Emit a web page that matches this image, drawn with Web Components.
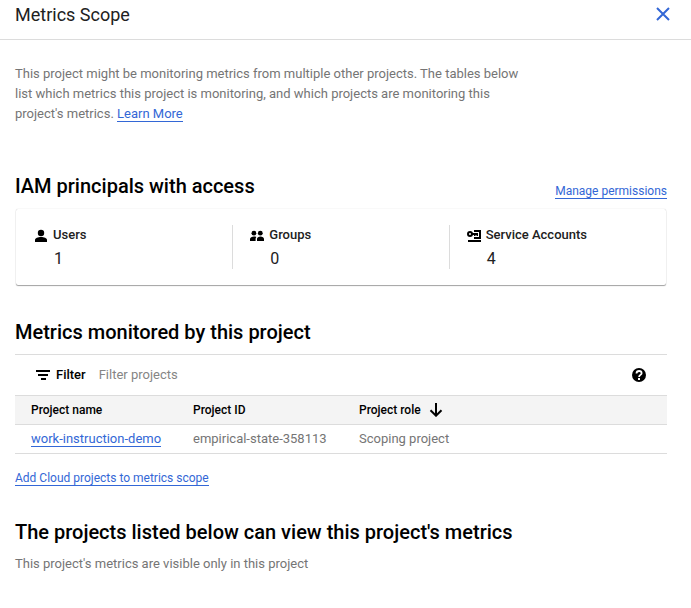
<!DOCTYPE html>
<html lang="en">
<head>
<meta charset="utf-8">
<meta name="viewport" content="width=device-width, initial-scale=1">
<title>Metrics Scope</title>
<style>
  body {
    margin: 0;
    background: #fff;
    color: #000;
    font-family: Roboto, "Liberation Sans", sans-serif;
    font-size: 13px;
    line-height: 20px;
    --link: #3367d6;
    --muted: #757575;
    --line: #dcdcdc;
  }
</style>
</head>
<body>
<metrics-scope-panel></metrics-scope-panel>

<script>
const ICONS = {
  close: '<path d="M1 1 13 13M13 1 1 13" fill="none" stroke="currentColor" stroke-width="2"/>',
  user: '<circle cx="7" cy="4" r="3.2"/><path d="M1 13v-2c0-2 3-3 6-3s6 1 6 3v2z"/>',
  group: '<circle cx="3.900" cy="4.200" r="2.400"/><circle cx="10.300" cy="4.200" r="2.400"/><path d="M0 12v-2c0-1.600 2-2.500 4-2.500.8 0 1.600.1 2.300.4C5.800 8.500 5.600 9.200 5.600 10v2zM7 12v-2c0-1.600 1.600-2.500 3.500-2.500S14 8.400 14 10v2z"/>',
  key: '<circle cx="3" cy="5" r="2" fill="none" stroke="currentColor" stroke-width="2"/><path d="M5 4h6v3H9.500V6h-1v1H7V6H5zM7 1h7v9H7V8h5V3H7zM1 11h13v2H1z"/>',
  filter: '<path d="M0 2h14v2H0zM2 6h10v2H2zM5 10h5v2H5z"/>',
  help: '<circle cx="7" cy="7" r="7"/><path d="M4.500 5.500C4.500 3.900 5.500 3 7.100 3s2.500.8 2.500 2.200c0 1.700-2.500 1.700-2.500 3.800" fill="none" stroke="#fff" stroke-width="1.800"/><path fill="#fff" d="M6 10h2v2H6z"/>',
  down: '<path d="M7 0v12.400M1.500 7.200 7 12.700l5.500-5.500" fill="none" stroke="currentColor" stroke-width="2"/>'
};

class ScopeIcon extends HTMLElement {
  connectedCallback() {
    const root = this.attachShadow({ mode: 'open' });
    root.innerHTML = `<style>
      :host { display: inline-flex; flex: none; width: 14px; height: 14px; }
      svg { display: block; width: 100%; height: 100%; fill: currentColor; }
    </style><svg viewBox="0 0 14 14" aria-hidden="true">${ICONS[this.getAttribute('name')]}</svg>`;
  }
}
customElements.define('scope-icon', ScopeIcon);

class ScopeLink extends HTMLElement {
  connectedCallback() {
    const root = this.attachShadow({ mode: 'open' });
    root.innerHTML = `<style>
      :host { display: inline; }
      a { color: var(--link); text-decoration: none; border-bottom: 1px solid currentColor; }
    </style><a href="#"><slot></slot></a>`;
  }
}
customElements.define('scope-link', ScopeLink);

class PanelHeader extends HTMLElement {
  connectedCallback() {
    const root = this.attachShadow({ mode: 'open' });
    root.innerHTML = `<style>
      :host { display: flex; justify-content: space-between; align-items: flex-start;
        padding: 3px 21px 12px 15px; border-bottom: 1px solid var(--line); }
      h1 { margin: 0; font-size: 18px; font-weight: 400; line-height: 24px; color: #212121; }
      button { display: flex; margin: 4px 0 0; padding: 0; border: 0; background: none; color: var(--link); cursor: pointer; }
    </style><h1><slot></slot></h1>
    <button type="button" aria-label="Close"><scope-icon name="close"></scope-icon></button>`;
  }
}
customElements.define('panel-header', PanelHeader);

class PrincipalCount extends HTMLElement {
  connectedCallback() {
    const root = this.attachShadow({ mode: 'open' });
    root.innerHTML = `<style>
      :host { display: grid; grid-template-columns: 14px 1fr; column-gap: 5px; row-gap: 4px; align-content: start;
        flex: 1; box-sizing: border-box; height: 44px; padding-left: 17px; color: #212121; }
      :host(:not(:first-child)) { border-left: 1px solid var(--line); }
      scope-icon { margin-top: 4px; color: #000; }
      .label { font-weight: 500; }
      .value { grid-column: 2; font-size: 16px; line-height: 20px; padding-left: 1px; }
    </style><scope-icon name="${this.getAttribute('icon')}"></scope-icon>
    <span class="label">${this.getAttribute('label')}</span>
    <span class="value"><slot></slot></span>`;
  }
}
customElements.define('principal-count', PrincipalCount);

class PrincipalsCard extends HTMLElement {
  connectedCallback() {
    const root = this.attachShadow({ mode: 'open' });
    root.innerHTML = `<style>
      :host { display: flex; margin: 0 1px; padding: 16px 1px; border-radius: 2px; background: #fff;
        box-shadow: 0 0 1px rgba(0,0,0,.25), 0 1px 1px rgba(0,0,0,.35); }
    </style><slot></slot>`;
  }
}
customElements.define('principals-card', PrincipalsCard);

class FilterBar extends HTMLElement {
  connectedCallback() {
    const root = this.attachShadow({ mode: 'open' });
    root.innerHTML = `<style>
      :host { display: flex; align-items: center; height: 40px; padding: 0 21px; border-top: 1px solid var(--line); }
      label { margin-left: 6px; font-weight: 500; }
      input { flex: 1; min-width: 0; margin: 0 0 0 13px; padding: 0; border: 0; outline: 0; background: none; font: inherit; color: #000; }
      input::placeholder { color: #858585; opacity: 1; }
      button { display: flex; padding: 0; border: 0; background: none; color: #000; cursor: pointer; }
    </style><scope-icon name="filter"></scope-icon>
    <label for="filter">Filter</label>
    <input id="filter" type="text" placeholder="Filter projects">
    <button type="button" aria-label="Help"><scope-icon name="help"></scope-icon></button>`;
  }
}
customElements.define('filter-bar', FilterBar);

class ProjectsTable extends HTMLElement {
  connectedCallback() {
    const root = this.attachShadow({ mode: 'open' });
    root.innerHTML = `<style>
      :host { display: block; }
      table { width: 100%; border-collapse: collapse; table-layout: fixed; }
      th, td { height: 28px; padding: 0 0 0 16px; text-align: left; white-space: nowrap;
        border-top: 1px solid var(--line); border-bottom: 1px solid var(--line); }
      th { background: #f4f4f4; font-size: 12px; font-weight: 500; }
      td { color: var(--muted); }
      .name, .id { box-sizing: border-box; }
      .name { width: 162px; } .id { width: 166px; }
      .sort { display: flex; align-items: center; gap: 8px; }
      .sort button { display: flex; padding: 0; border: 0; background: none; color: #000; cursor: pointer; }
    </style><table>
      <thead><tr>
        <th class="name" scope="col">Project name</th>
        <th class="id" scope="col">Project ID</th>
        <th scope="col"><div class="sort">Project role
          <button type="button" aria-label="Sort by project role"><scope-icon name="down"></scope-icon></button></div></th>
      </tr></thead>
      <tbody><tr>
        <td><scope-link>work-instruction-demo</scope-link></td>
        <td>empirical-state-358113</td>
        <td>Scoping project</td>
      </tr></tbody>
    </table>`;
  }
}
customElements.define('projects-table', ProjectsTable);

class MetricsScopePanel extends HTMLElement {
  connectedCallback() {
    const root = this.attachShadow({ mode: 'open' });
    root.innerHTML = `<style>
      :host { display: block; }
      main { padding: 24px 24px 24px 15px; }
      p { margin: 0; color: var(--muted); }
      .intro { max-width: 520px; }
      h2 { margin: 0; font-size: 20px; line-height: 24px; font-weight: 500; }
      .access { display: flex; justify-content: space-between; align-items: flex-end; margin: 50px 0 8px; }
      .access h2 { margin-bottom: 3px; }
      .small { font-size: 12px; }
      .monitored { margin: 35px 0 10px; }
      .add { margin-top: 14px; }
      .viewers { margin: 32px 0 10px; }
    </style>
    <panel-header>Metrics Scope</panel-header>
    <main>
      <p class="intro"><span>This project might be monitoring metrics from multiple other projects. The tables below list which metrics this project is monitoring, and which projects are monitoring this</span> <span>project's metrics.</span> <scope-link>Learn More</scope-link></p>
      <div class="access">
        <h2>IAM principals with access</h2>
        <scope-link class="small">Manage permissions</scope-link>
      </div>
      <principals-card>
        <principal-count icon="user" label="Users">1</principal-count>
        <principal-count icon="group" label="Groups">0</principal-count>
        <principal-count icon="key" label="Service Accounts">4</principal-count>
      </principals-card>
      <h2 class="monitored">Metrics monitored by this project</h2>
      <filter-bar></filter-bar>
      <projects-table></projects-table>
      <p class="add small"><scope-link>Add Cloud projects to metrics scope</scope-link></p>
      <h2 class="viewers">The projects listed below can view this project's metrics</h2>
      <p>This project's metrics are visible only in this project</p>
    </main>`;
  }
}
customElements.define('metrics-scope-panel', MetricsScopePanel);
</script>
</body>
</html>
